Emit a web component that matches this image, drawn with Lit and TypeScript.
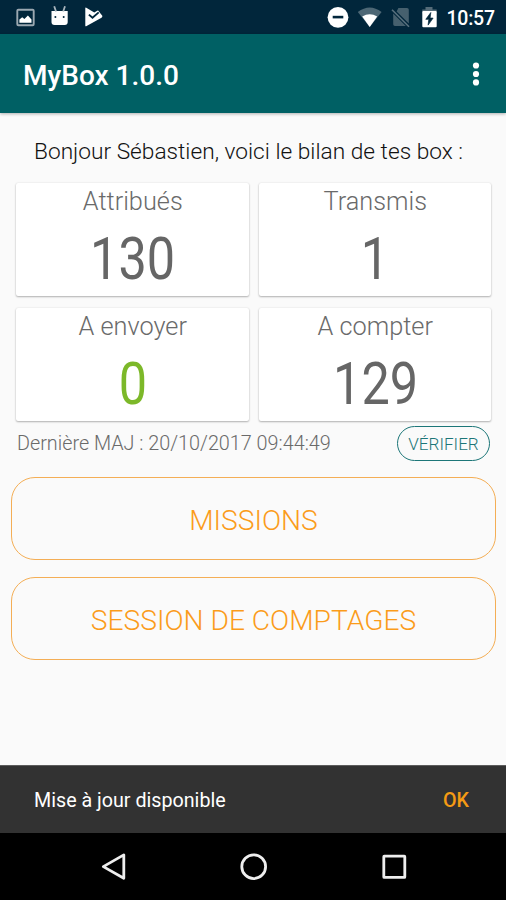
import { LitElement, html, css, svg } from "lit";
import { customElement, property } from "lit/decorators.js";

@customElement("status-bar")
class StatusBar extends LitElement {
  static styles = css`
    :host { display: block; height: 34px; background: #01263b; }
    svg { display: block; }
    .clock { font: 500 19.5px Roboto, sans-serif; fill: #fff; }
  `;
  render() {
    return html`<svg width="506" height="34" viewBox="0 0 506 34">
      <rect x="17.3" y="9.8" width="16.4" height="15.4" rx="1" fill="none" stroke="#9ba8b1" stroke-width="1.9" />
      <path d="M19.4 22.8v-3.3l2.8-2.3 2.2 1.7 3.5-3.3 3.6 3.8v3.4z" fill="#fff" />
      <path d="M51.5 11h16.2v11.1a3 3 0 0 1-3 3H54.5a3 3 0 0 1-3-3z" fill="#fff" />
      <path d="M54.2 6.2l1.8 5.3M65 6.2l-1.8 5.3" stroke="#a9b5bd" stroke-width="1.8" />
      <circle cx="55.4" cy="17" r="1" fill="#01263b" /><circle cx="63.7" cy="17" r="1" fill="#01263b" />
      <path d="M85.3 8.2q0-.9 1-.4l8 4.6 2.9-1.7q1.2-.5 1.7.7l3.4 4.4q.4 1.2-.8 1.9L86.6 26q-1.3.7-1.3-.6z" fill="#fff" />
      <path d="M88.9 14.6l3.6 3.2 6.2-5.4" fill="none" stroke="#01263b" stroke-width="1.9" />
      <circle cx="338" cy="17.3" r="10.4" fill="#fff" />
      <rect x="332.7" y="15.8" width="10.6" height="2.6" fill="#01263b" />
      <path d="M357.8 12q11.9-9 23.8 0L369.7 27z" fill="#4d6775" />
      <path d="M362.2 16.5q7.5-4.6 15 0L369.7 27z" fill="#fff" />
      <path d="M392 9.7l17 17" stroke="#5a717e" stroke-width="1.6" />
      <path d="M393.2 13.4L405.8 26H395q-1.8 0-1.8-1.8zM396.6 11.4l12.2 12.2V9.8Q408.8 8 407 8h-8.6z" fill="#46606e" />
      <path d="M425.5 7h7v2.5h4.2v4h-14.4v-4h3.2z" fill="#556c79" />
      <rect x="422.3" y="11" width="14.4" height="16.3" rx="1" fill="#fff" />
      <path d="M430.8 12.5l-5 6.8h3l-.7 5.8 5-7h-3z" fill="#01263b" stroke="#01263b" stroke-width=".7" />
      <text class="clock" x="446.5" y="25" textLength="48.5">10:57</text>
    </svg>`;
  }
}

@customElement("stat-card")
class StatCard extends LitElement {
  @property() label = "";
  @property() value = "";
  @property({ type: Boolean, reflect: true }) good = false;
  static styles = css`
    :host { display: flex; flex-direction: column; align-items: center; height: 113px; background: #fff;
      border-radius: 2px; box-shadow: 0 1px 2px rgba(0,0,0,.28), 0 0 2px rgba(0,0,0,.1); color: #666;
      font-family: Roboto, sans-serif; }
    .label { font-size: 25.3px; font-weight: 300; line-height: 30px; margin: 4px 0 0 1px; color: #6a6a6a; }
    .value { font-size: 60px; font-weight: 400; line-height: 70px; margin: 7px 0 0 1px; transform: scaleX(.84); }
    :host([good]) .value { color: #7cb829; }
  `;
  render() {
    return html`<div class="label">${this.label}</div><div class="value">${this.value}</div>`;
  }
}

@customElement("app-root")
class AppRoot extends LitElement {
  static styles = css`
    :host { display: flex; flex-direction: column; width: 506px; height: 900px; overflow: hidden;
      background: #fafafa; font-family: Roboto, sans-serif; box-sizing: border-box; white-space: nowrap; }
    button { font: inherit; background: none; padding: 0; border: 0; box-sizing: border-box; display: block; }
    .bar { display: flex; align-items: center; justify-content: space-between; height: 79px; flex: none;
      box-sizing: border-box; padding: 0 24px 0 23px; background: #006064; color: #fff; box-shadow: 0 1px 3px rgba(0,0,0,.3); }
    .title { font-size: 28px; font-weight: 500; line-height: 32px; padding-top: 4px; }
    svg { display: block; }
    .hello { margin-top: 25px; padding-left: 34px; font-size: 22.7px; font-weight: 300; line-height: 28px; color: #111; }
    .grid { display: grid; grid-template-columns: 1fr 1fr; gap: 12px 10px; margin: 17px 15px 0 16px; }
    .sync { display: flex; justify-content: space-between; align-items: center; height: 35px; margin: 5px 16px 0 17px;
      font-size: 19.8px; font-weight: 300; color: #6a6a6a; }
    .check { width: 93px; height: 35px; border: 1.4px solid #1c7678; border-radius: 18px; color: #1c7678; font-size: 17.1px; }
    .actions { display: flex; flex-direction: column; gap: 17px; margin: 16px 10px 0 11px; }
    .action { height: 83px; border: 1.5px solid #f4ae55; border-radius: 24px; color: #fa9c1b; font-size: 28.2px; font-weight: 300; padding-top: 4px; }
    .snack { display: flex; align-items: center; justify-content: space-between; height: 68px; margin-top: auto; flex: none;
      box-sizing: border-box; padding: 1px 37px 0 34px; background: #323232; color: #fff; font-size: 19.7px; border-top: 1px solid #5c5c5c; }
    .ok { color: #f59b14; font-weight: 500; }
    .nav { height: 67px; flex: none; background: #000; }
  `;
  render() {
    return html`
      <status-bar></status-bar>
      <header class="bar">
        <div class="title">MyBox 1.0.0</div>
        <svg width="12" height="28" viewBox="0 0 12 28" fill="#fff">
          ${[5.5, 14, 22.4].map((y) => svg`<circle cx="6" cy=${y} r="3.1" />`)}
        </svg>
      </header>
      <div class="hello">Bonjour Sébastien, voici le bilan de tes box :</div>
      <div class="grid">
        <stat-card label="Attribués" value="130"></stat-card>
        <stat-card label="Transmis" value="1"></stat-card>
        <stat-card label="A envoyer" value="0" good></stat-card>
        <stat-card label="A compter" value="129"></stat-card>
      </div>
      <div class="sync"><span>Dernière MAJ : 20/10/2017 09:44:49</span><button class="check">VÉRIFIER</button></div>
      <div class="actions">
        <button class="action">MISSIONS</button>
        <button class="action">SESSION DE COMPTAGES</button>
      </div>
      <div class="snack"><span>Mise à jour disponible</span><button class="ok">OK</button></div>
      <nav class="nav">
        <svg width="506" height="67" viewBox="0 0 506 67" fill="none" stroke="#eee" stroke-width="2.8" stroke-linejoin="round">
          <path d="M103.3 33.6L123.8 21.9V45.3z" />
          <circle cx="253.7" cy="33.7" r="11.9" />
          <rect x="383.8" y="23.2" width="21" height="21.2" rx=".5" />
        </svg>
      </nav>`;
  }
}
